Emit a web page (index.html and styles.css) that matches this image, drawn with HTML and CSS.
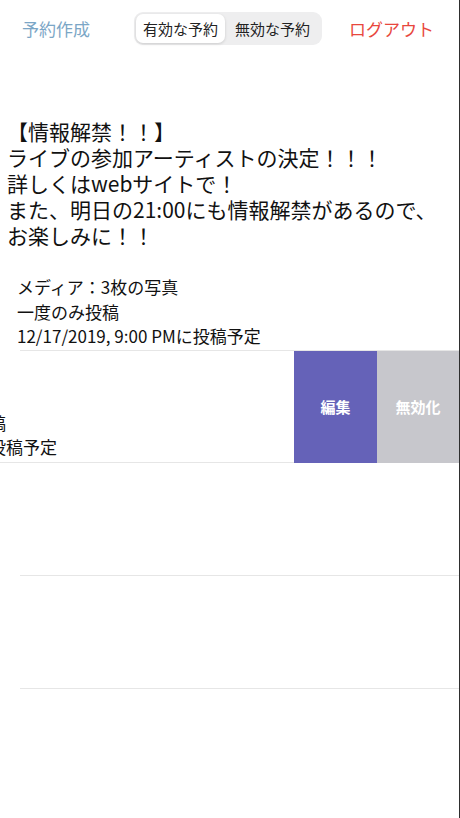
FILE: index.html
```html
<!DOCTYPE html>
<html lang="ja">
<head>
    <meta charset="UTF-8">
    <meta name="viewport" content="width=device-width, initial-scale=1.0">
    <title>予約一覧</title>
    <link rel="stylesheet" href="styles.css">
</head>
<body>
    <div class="screen">
        <header class="topbar">
            <a class="nav-link create" href="#">予約作成</a>
            <div class="segmented">
                <span class="segment active">有効な予約</span>
                <span class="segment">無効な予約</span>
            </div>
            <a class="nav-link logout" href="#">ログアウト</a>
        </header>

        <ul class="post-list">
            <li class="post">
                <p class="post-body">【情報解禁！！】<br>ライブの参加アーティストの決定！！！<br>詳しくはwebサイトで！<br>また、明日の21:00にも情報解禁があるので、<br>お楽しみに！！</p>
                <div class="post-meta">
                    <p>メディア：3枚の写真</p>
                    <p>一度のみ投稿</p>
                    <p>12/17/2019, 9:00 PMに投稿予定</p>
                </div>
            </li>

            <li class="post swiped">
                <div class="post-content">
                    <div class="post-meta">
                        <p>メディア：なし</p>
                        <p>毎週月曜日に定期投稿</p>
                        <p>毎週金曜日の夜間に投稿予定</p>
                    </div>
                </div>
                <button class="action edit">編集</button>
                <button class="action disable">無効化</button>
            </li>

            <li class="post empty"></li>
            <li class="post empty"></li>
        </ul>
    </div>
</body>
</html>
```

FILE: styles.css
```css
body {
    margin: 0;
    background: #fff;
    font-family: "Noto Sans CJK JP", sans-serif;
    color: #111;
}

p {
    margin: 0;
}

.screen {
    width: 459px;
    min-height: 818px;
    border-right: 1px solid #2e2e2e;
    overflow: hidden;
}

.topbar {
    display: grid;
    grid-template-columns: 1fr auto 1fr;
    align-items: center;
    height: 56px;
    padding: 0 25px 0 22px;
}

.nav-link {
    font-size: 17px;
    text-decoration: none;
}

.create {
    color: #7ba6c6;
}

.logout {
    color: #e8473d;
    justify-self: end;
}

.segmented {
    display: flex;
    padding: 2px;
    background: #eeeeef;
    border-radius: 9px;
}

.segment {
    width: 92px;
    height: 29px;
    line-height: 29px;
    text-align: center;
    font-size: 15px;
    color: #222;
}

.segment.active {
    width: 89px;
    background: #fff;
    border-radius: 7px;
    box-shadow: 0 1px 3px rgba(0, 0, 0, 0.15);
}

.segment + .segment {
    width: 95px;
}

.post-list {
    list-style: none;
    margin: 0;
    padding: 0;
}

.post {
    display: flex;
    flex-direction: column;
    justify-content: flex-end;
    height: 113px;
    padding-left: 20px;
}

.post::after {
    content: "";
    height: 1px;
    background: #e6e6e6;
}

.post:first-child {
    height: auto;
    padding: 62px 0 0 0;
}

.post:first-child::after {
    margin-left: 20px;
}

.post:first-child .post-meta {
    padding-bottom: 1px;
}

.post-body {
    padding-left: 7px;
    font-size: 21px;
    line-height: 26px;
}

.post-meta {
    padding: 27px 0 0 17px;
    font-size: 17px;
    line-height: 24.5px;
}

.post.swiped {
    flex-direction: row;
    height: 112px;
    padding: 0;
    overflow: hidden;
}

.post.swiped::after {
    display: none;
}

.post-content {
    flex: 0 0 100%;
    margin-left: -166px;
    display: flex;
    flex-direction: column;
    justify-content: flex-end;
    border-bottom: 1px solid #e6e6e6;
    box-sizing: border-box;
}

.post-content .post-meta {
    padding: 0 0 2px 1px;
}

.action {
    flex: 0 0 83px;
    border: none;
    color: #fff;
    font-family: inherit;
    font-size: 15px;
    font-weight: bold;
}

.edit {
    background: #6562b8;
}

.disable {
    background: #c7c7cc;
    flex-basis: 82px;
}
```
